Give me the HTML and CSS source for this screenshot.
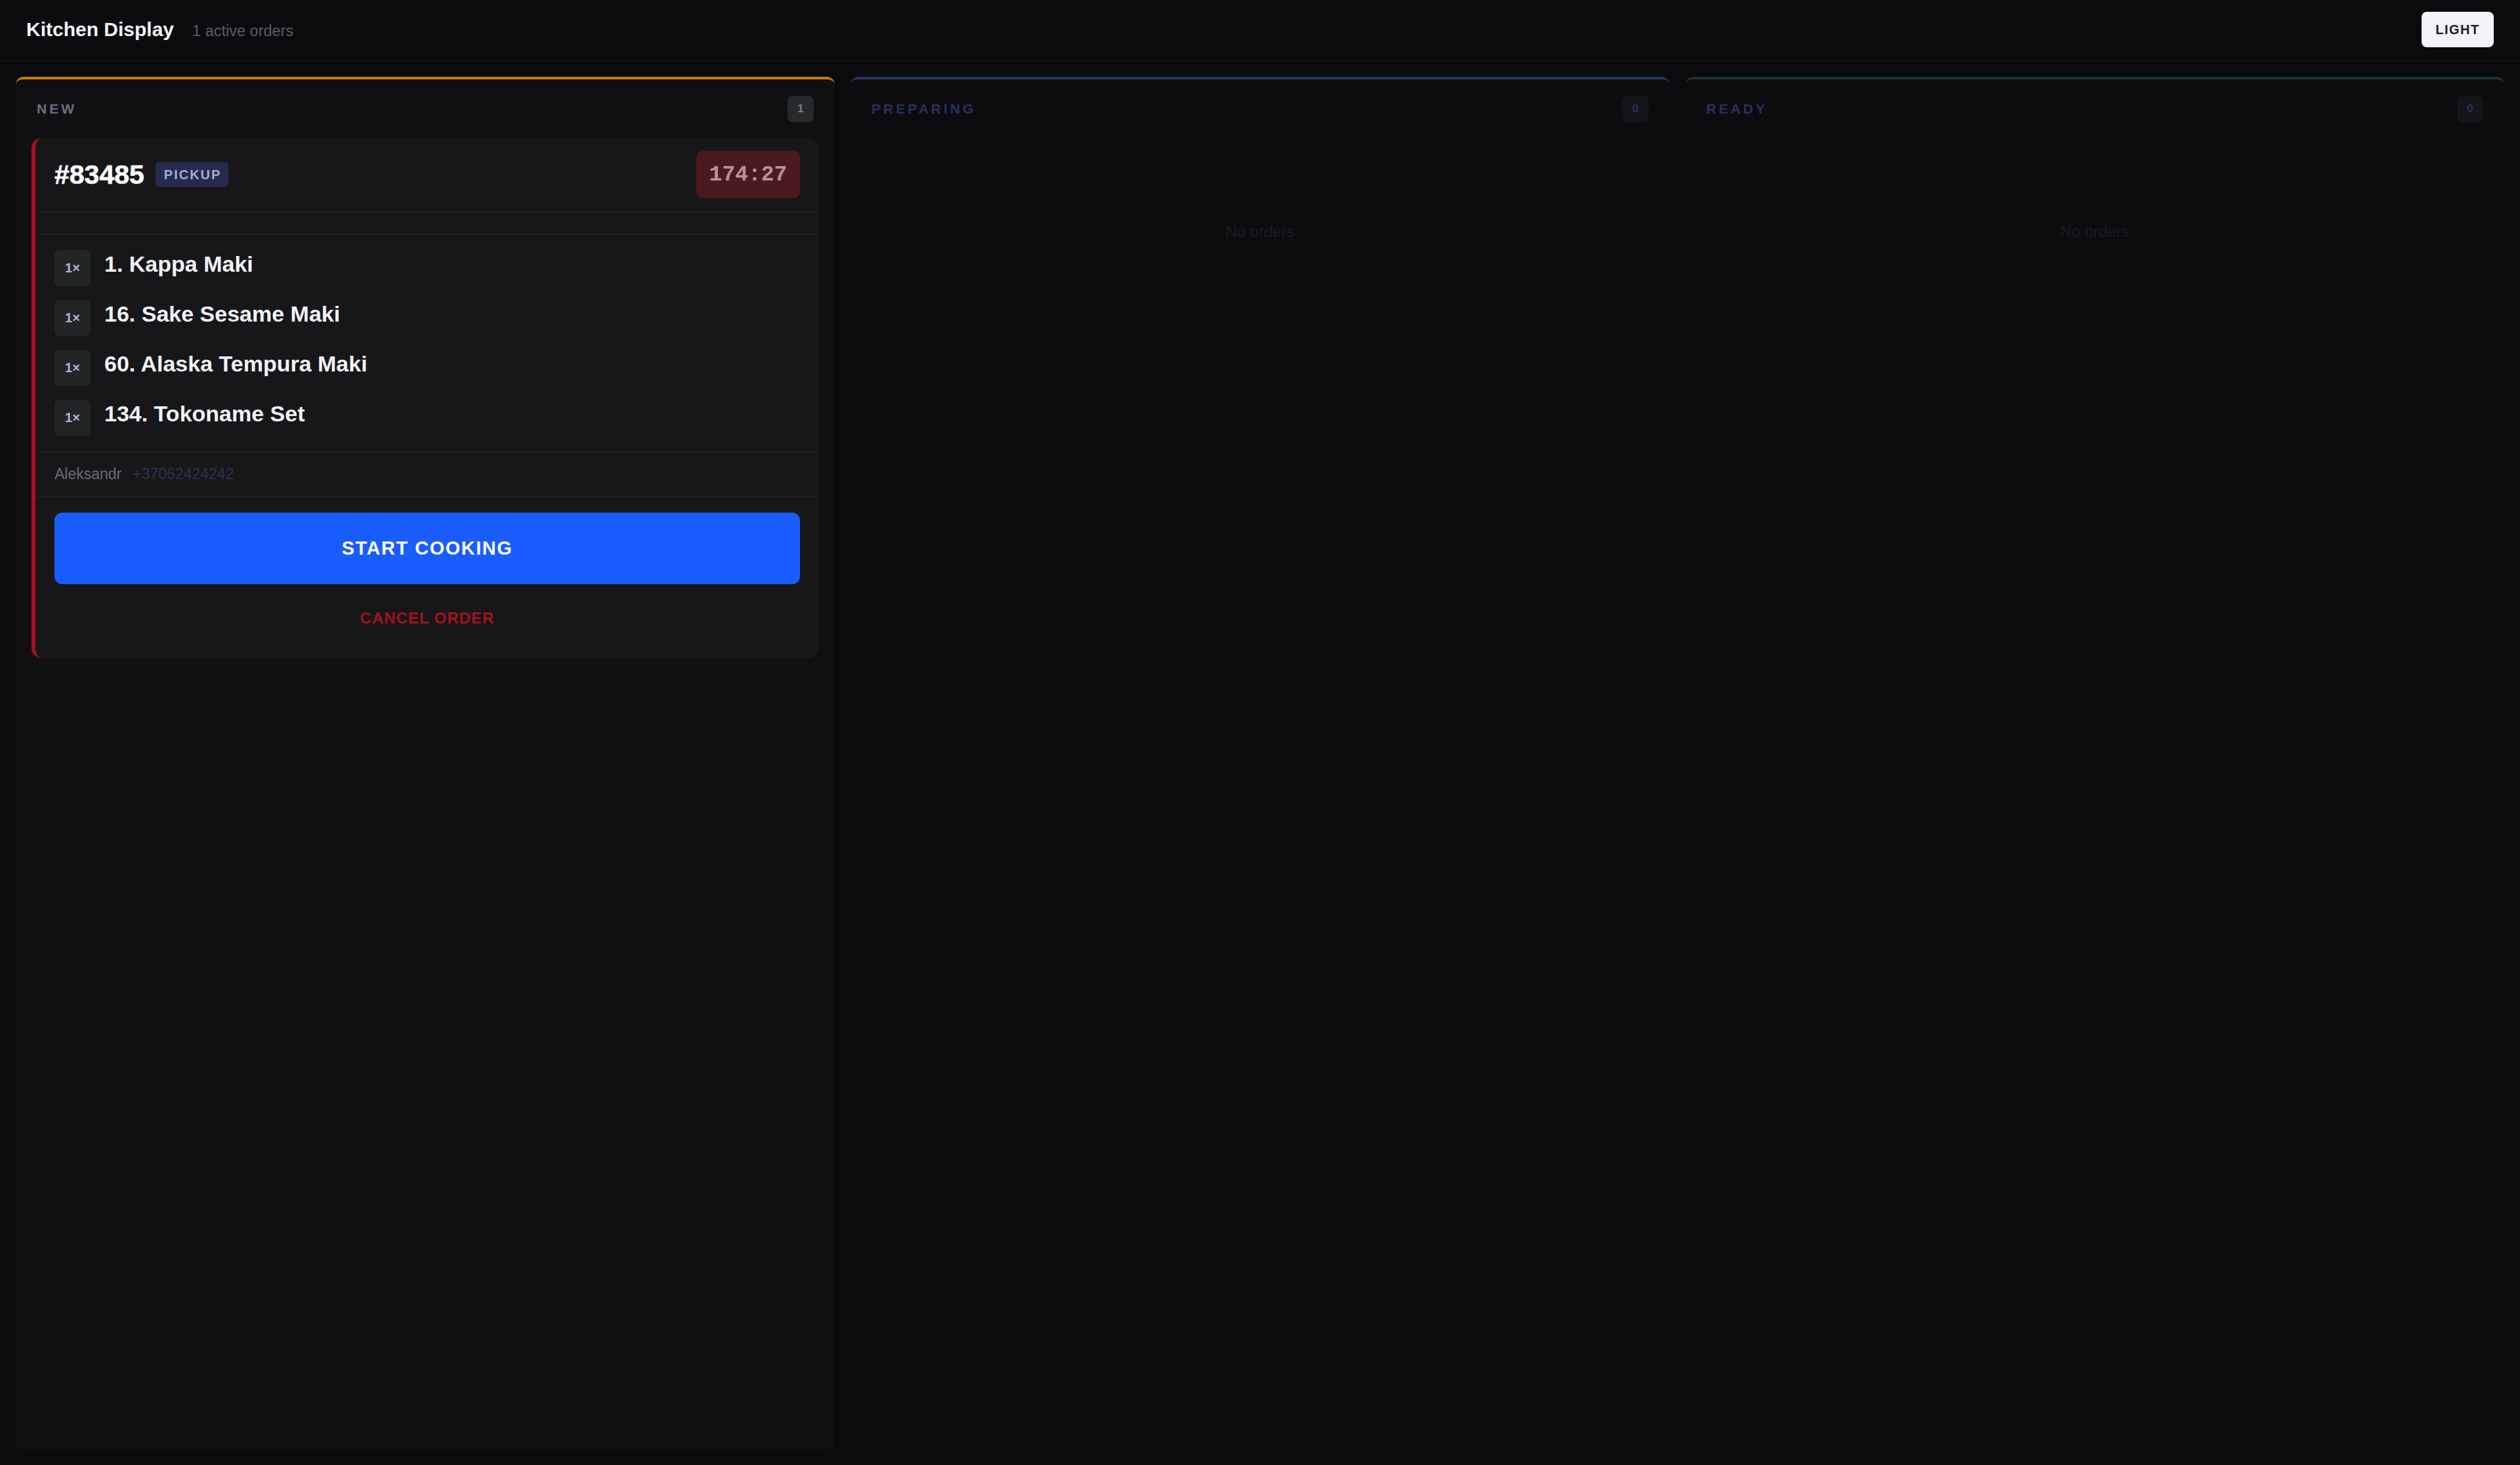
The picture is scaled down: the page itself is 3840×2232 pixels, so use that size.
FILE: index.html
```html
<!DOCTYPE html>
<html lang="en">
<head>
  <meta charset="UTF-8">
  <meta name="viewport" content="width=device-width, initial-scale=1.0">
  <title>Kitchen Display</title>
  <link rel="stylesheet" href="styles.css">
</head>
<body>
  <div class="topbar">
    <div class="brand">
      <h1>Kitchen Display</h1>
      <span class="active-count">1 active orders</span>
    </div>
    <button class="theme-btn">LIGHT</button>
  </div>

  <div class="board">
    <div class="column col-new">
      <div class="col-head">
        <span class="col-title">NEW</span>
        <span class="col-count">1</span>
      </div>
      <div class="col-body">
        <div class="order">
          <div class="order-head">
            <div class="order-id">
              <span class="order-num">#83485</span>
              <span class="order-type">PICKUP</span>
            </div>
            <span class="timer">174:27</span>
          </div>
          <div class="order-note"></div>
          <div class="order-items">
            <div class="item"><span class="qty">1×</span><span class="item-name">1. Kappa Maki</span></div>
            <div class="item"><span class="qty">1×</span><span class="item-name">16. Sake Sesame Maki</span></div>
            <div class="item"><span class="qty">1×</span><span class="item-name">60. Alaska Tempura Maki</span></div>
            <div class="item"><span class="qty">1×</span><span class="item-name">134. Tokoname Set</span></div>
          </div>
          <div class="customer">
            <span class="cust-name">Aleksandr</span>
            <span class="cust-phone">+37062424242</span>
          </div>
          <div class="order-actions">
            <button class="btn-start">START COOKING</button>
            <button class="btn-cancel">CANCEL ORDER</button>
          </div>
        </div>
      </div>
    </div>

    <div class="column col-preparing empty">
      <div class="col-head">
        <span class="col-title">PREPARING</span>
        <span class="col-count">0</span>
      </div>
      <div class="col-body">
        <div class="no-orders">No orders</div>
      </div>
    </div>

    <div class="column col-ready empty">
      <div class="col-head">
        <span class="col-title">READY</span>
        <span class="col-count">0</span>
      </div>
      <div class="col-body">
        <div class="no-orders">No orders</div>
      </div>
    </div>
  </div>
</body>
</html>
```

FILE: styles.css
```css
* {
  margin: 0;
  padding: 0;
  box-sizing: border-box;
}
html,
body {
  height: 100%;
}
body {
  background-color: #0b0b0e;
  color: #f2f2f6;
  font-family: "Liberation Sans", Arial, sans-serif;
  display: flex;
  flex-direction: column;
}
button {
  font-family: inherit;
  border: none;
  cursor: pointer;
}

/* top bar */
.topbar {
  display: flex;
  align-items: center;
  justify-content: space-between;
  padding: 18px 40px 20px 40px;
  border-bottom: 1px solid #1c1c20;
}
.brand {
  display: flex;
  align-items: baseline;
  gap: 28px;
}
.brand h1 {
  font-size: 30px;
  font-weight: bold;
  color: #f4f4f8;
}
.active-count {
  font-size: 23.5px;
  color: #5c5c6a;
}
.theme-btn {
  width: 110px;
  height: 54px;
  border-radius: 8px;
  background-color: #f3f3f7;
  color: #1a1a1f;
  font-size: 20px;
  font-weight: bold;
  letter-spacing: 1.5px;
}

/* columns */
.board {
  flex: 1;
  display: grid;
  grid-template-columns: repeat(3, 1fr);
  gap: 24px;
  padding: 24px;
}
.column {
  display: flex;
  flex-direction: column;
  background-color: #101013;
  border-top: 4px solid #c27b0c;
  border-radius: 12px;
}
.col-head {
  display: flex;
  align-items: center;
  justify-content: space-between;
  padding: 25px 32px 24px 32px;
}
.col-title {
  font-size: 21px;
  font-weight: bold;
  letter-spacing: 4px;
  color: #6e6e7c;
}
.col-count {
  width: 40px;
  height: 40px;
  border-radius: 8px;
  display: flex;
  align-items: center;
  justify-content: center;
  background-color: #272a2b;
  color: #7c7c9a;
  font-size: 17px;
  font-weight: bold;
}
.col-body {
  padding: 0 24px 24px 24px;
}

.empty {
  background-color: #0c0c0f;
}
.col-preparing {
  border-top-color: #2a3163;
}
.col-ready {
  border-top-color: #233230;
}
.empty .col-title {
  color: #2a3060;
}
.empty .col-count {
  background-color: #141519;
  color: #2a3060;
}
.no-orders {
  text-align: center;
  padding-top: 129px;
  font-size: 24px;
  color: #1b1b1f;
}

/* order card */
.order {
  background-color: #17171a;
  border-left: 6px solid #a8101c;
  border-radius: 16px;
}
.order-head {
  display: flex;
  align-items: center;
  justify-content: space-between;
  padding: 20px 29px;
  border-bottom: 1px solid #25272a;
}
.order-id {
  display: flex;
  align-items: center;
  gap: 17px;
}
.order-num {
  font-size: 41px;
  font-weight: bold;
  color: #ffffff;
  -webkit-text-stroke: 0.6px #ffffff;
}
.order-type {
  height: 38px;
  padding: 0 11px 0 13px;
  display: flex;
  align-items: center;
  border-radius: 6px;
  background-color: #262b4d;
  color: #a6acd8;
  font-size: 20px;
  font-weight: bold;
  letter-spacing: 2px;
}
.timer {
  width: 158px;
  height: 72px;
  display: flex;
  align-items: center;
  justify-content: center;
  border-radius: 10px;
  background-color: #4b1a1f;
  color: #b5939a;
  font-family: "Liberation Mono", "Courier New", monospace;
  font-size: 33px;
  font-weight: bold;
}
.order-note {
  height: 34px;
  border-bottom: 1px solid #25272a;
}
.order-items {
  display: flex;
  flex-direction: column;
  gap: 21px;
  padding: 24px 29px 24px 29px;
  border-bottom: 1px solid #25272a;
}
.item {
  display: flex;
  align-items: flex-start;
  gap: 21px;
}
.qty {
  width: 55px;
  height: 55px;
  flex-shrink: 0;
  display: flex;
  align-items: center;
  justify-content: center;
  border-radius: 8px;
  background-color: #222525;
  color: #b4b4d4;
  font-size: 20px;
  font-weight: bold;
}
.item-name {
  font-size: 34px;
  font-weight: bold;
  line-height: 1.2;
  padding-top: 1px;
  color: #f3f3f8;
}
.customer {
  display: flex;
  align-items: center;
  gap: 17px;
  padding: 20px 29px 20px 29px;
  font-size: 23px;
  border-bottom: 1px solid #25272a;
}
.cust-name {
  color: #6c6c74;
}
.cust-phone {
  color: #2c3155;
}
.order-actions {
  display: flex;
  flex-direction: column;
  gap: 12px;
  padding: 24px 29px 21px 29px;
}
.btn-start {
  height: 109px;
  border-radius: 12px;
  background-color: #1a5dff;
  color: #ffffff;
  font-size: 29px;
  font-weight: bold;
  letter-spacing: 1.5px;
}
.btn-cancel {
  height: 80px;
  background: none;
  color: #a3121c;
  font-size: 24px;
  font-weight: bold;
  letter-spacing: 1px;
}
```
